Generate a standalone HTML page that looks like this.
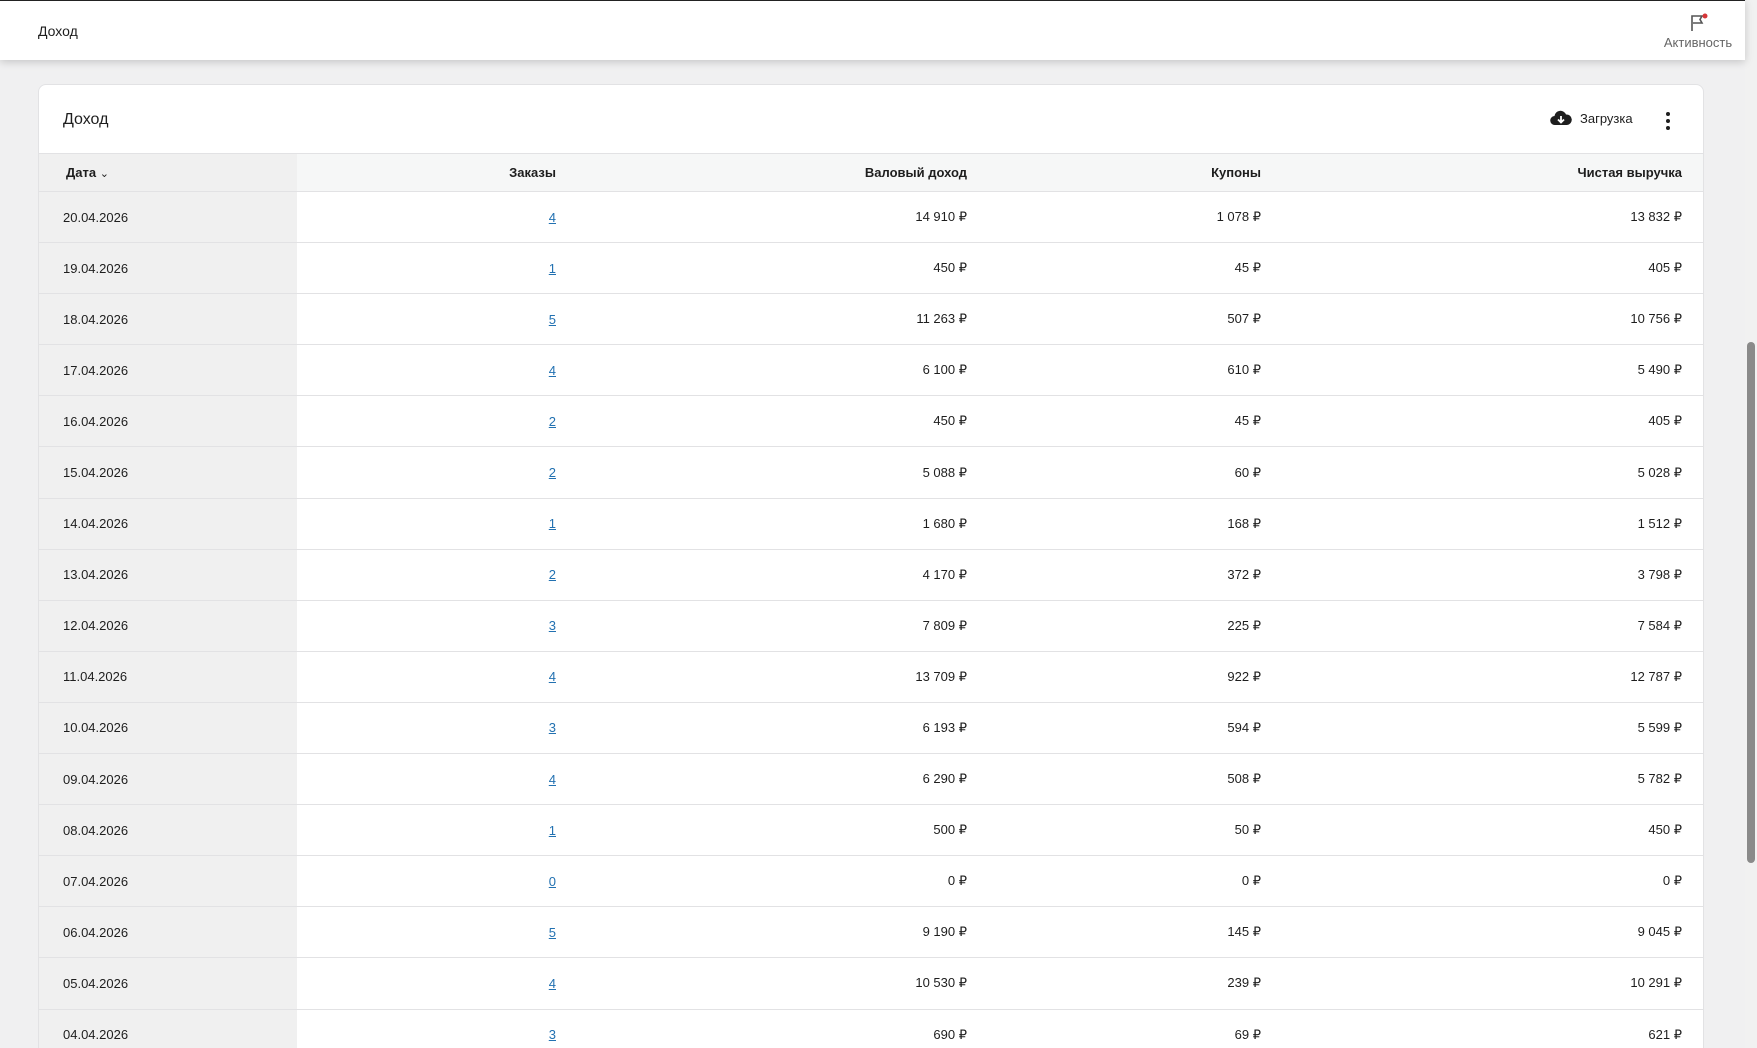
<!DOCTYPE html>
<html><head><meta charset="utf-8"><style>
*{margin:0;padding:0;box-sizing:border-box}
html{width:1757px;height:1048px;overflow:hidden}
body{width:1757px;height:1048px;overflow:hidden;background:#f0f0f1;font-family:"Liberation Sans",sans-serif;color:#1e1e1e;position:relative}
.top{position:absolute;left:0;top:0;width:1745px;height:60px;background:#fff;border-top:1px solid #222;box-shadow:0 2px 8px rgba(0,0,0,.18);z-index:2}
.top .t{position:absolute;left:38px;top:22px;font-size:14px}
.act{position:absolute;left:1650px;top:10px;width:96px;text-align:center;font-size:13px;color:#666}
.sb{position:absolute;right:0;top:0;width:12px;height:1048px;background:#f1f1f1}
.thumb{position:absolute;right:2px;top:342px;width:8px;height:521px;background:#8a8a8a;border-radius:4px}
.card{position:absolute;left:38px;top:84px;width:1666px;height:980px;background:#fff;border:1px solid #e2e2e4;border-radius:8px;overflow:hidden}
.ct{position:absolute;left:24px;top:26px;font-size:16px}
.dl{position:absolute;left:1511px;top:25px;font-size:13px;display:flex;align-items:center;gap:8px}
.dots{position:absolute;left:1626px;top:26px}
table{position:absolute;left:0;top:68px;width:1666px;border-collapse:collapse;font-size:13px}
th{height:38px;background:#f6f7f7;font-weight:bold;text-align:right;padding-right:23px;border-top:1px solid #e2e2e4;border-bottom:1px solid #e2e2e4}
td{height:51.1px;text-align:right;padding-right:23px;border-bottom:1px solid #e2e2e4}
th.c,td.c{padding-right:39px}
th.d,td.d{text-align:left;padding-left:24px;background:#f0f0f0;width:258px}
th.d{padding-left:27px}
td a{color:#2271b1;text-decoration:underline}
</style></head><body>
<div class="top"><div class="t">Доход</div>
<div class="act"><svg width="20" height="20" viewBox="0 0 20 20" style="display:block;margin:2px auto 2px"><path d="M4 18V3h10l-2 3.5 2 3.5H5" fill="none" stroke="#555" stroke-width="1.6"/><circle cx="17" cy="3" r="2.5" fill="#d63638"/></svg>Активность</div></div>
<div class="sb"><div class="thumb"></div></div>
<div class="card">
<div class="ct">Доход</div>
<div class="dl"><svg width="22" height="16" viewBox="0 0 22 16"><path d="M5 15a4.5 4.5 0 0 1-.5-9A6 6 0 0 1 16 4.5a4.5 4.5 0 0 1 1 10.5z" fill="#1e1e1e"/><path d="M11 6v6M8 9.5l3 3 3-3" stroke="#fff" stroke-width="1.8" fill="none"/></svg>Загрузка</div>
<div class="dots"><svg width="6" height="20"><circle cx="3" cy="3" r="2" fill="#1e1e1e"/><circle cx="3" cy="10" r="2" fill="#1e1e1e"/><circle cx="3" cy="17" r="2" fill="#1e1e1e"/></svg></div>
<table>
<tr><th class="d">Дата <span style="font-weight:normal;font-size:11px">&#8964;</span></th><th class="c" style="width:298px">Заказы</th><th class="c" style="width:411px">Валовый доход</th><th class="c" style="width:294px">Купоны</th><th>Чистая выручка</th></tr>
<tr><td class="d">20.04.2026</td><td class="c"><a>4</a></td><td class="c">14 910 ₽</td><td class="c">1 078 ₽</td><td>13 832 ₽</td></tr>
<tr><td class="d">19.04.2026</td><td class="c"><a>1</a></td><td class="c">450 ₽</td><td class="c">45 ₽</td><td>405 ₽</td></tr>
<tr><td class="d">18.04.2026</td><td class="c"><a>5</a></td><td class="c">11 263 ₽</td><td class="c">507 ₽</td><td>10 756 ₽</td></tr>
<tr><td class="d">17.04.2026</td><td class="c"><a>4</a></td><td class="c">6 100 ₽</td><td class="c">610 ₽</td><td>5 490 ₽</td></tr>
<tr><td class="d">16.04.2026</td><td class="c"><a>2</a></td><td class="c">450 ₽</td><td class="c">45 ₽</td><td>405 ₽</td></tr>
<tr><td class="d">15.04.2026</td><td class="c"><a>2</a></td><td class="c">5 088 ₽</td><td class="c">60 ₽</td><td>5 028 ₽</td></tr>
<tr><td class="d">14.04.2026</td><td class="c"><a>1</a></td><td class="c">1 680 ₽</td><td class="c">168 ₽</td><td>1 512 ₽</td></tr>
<tr><td class="d">13.04.2026</td><td class="c"><a>2</a></td><td class="c">4 170 ₽</td><td class="c">372 ₽</td><td>3 798 ₽</td></tr>
<tr><td class="d">12.04.2026</td><td class="c"><a>3</a></td><td class="c">7 809 ₽</td><td class="c">225 ₽</td><td>7 584 ₽</td></tr>
<tr><td class="d">11.04.2026</td><td class="c"><a>4</a></td><td class="c">13 709 ₽</td><td class="c">922 ₽</td><td>12 787 ₽</td></tr>
<tr><td class="d">10.04.2026</td><td class="c"><a>3</a></td><td class="c">6 193 ₽</td><td class="c">594 ₽</td><td>5 599 ₽</td></tr>
<tr><td class="d">09.04.2026</td><td class="c"><a>4</a></td><td class="c">6 290 ₽</td><td class="c">508 ₽</td><td>5 782 ₽</td></tr>
<tr><td class="d">08.04.2026</td><td class="c"><a>1</a></td><td class="c">500 ₽</td><td class="c">50 ₽</td><td>450 ₽</td></tr>
<tr><td class="d">07.04.2026</td><td class="c"><a>0</a></td><td class="c">0 ₽</td><td class="c">0 ₽</td><td>0 ₽</td></tr>
<tr><td class="d">06.04.2026</td><td class="c"><a>5</a></td><td class="c">9 190 ₽</td><td class="c">145 ₽</td><td>9 045 ₽</td></tr>
<tr><td class="d">05.04.2026</td><td class="c"><a>4</a></td><td class="c">10 530 ₽</td><td class="c">239 ₽</td><td>10 291 ₽</td></tr>
<tr><td class="d">04.04.2026</td><td class="c"><a>3</a></td><td class="c">690 ₽</td><td class="c">69 ₽</td><td>621 ₽</td></tr>
</table>
</div>
</body></html>
